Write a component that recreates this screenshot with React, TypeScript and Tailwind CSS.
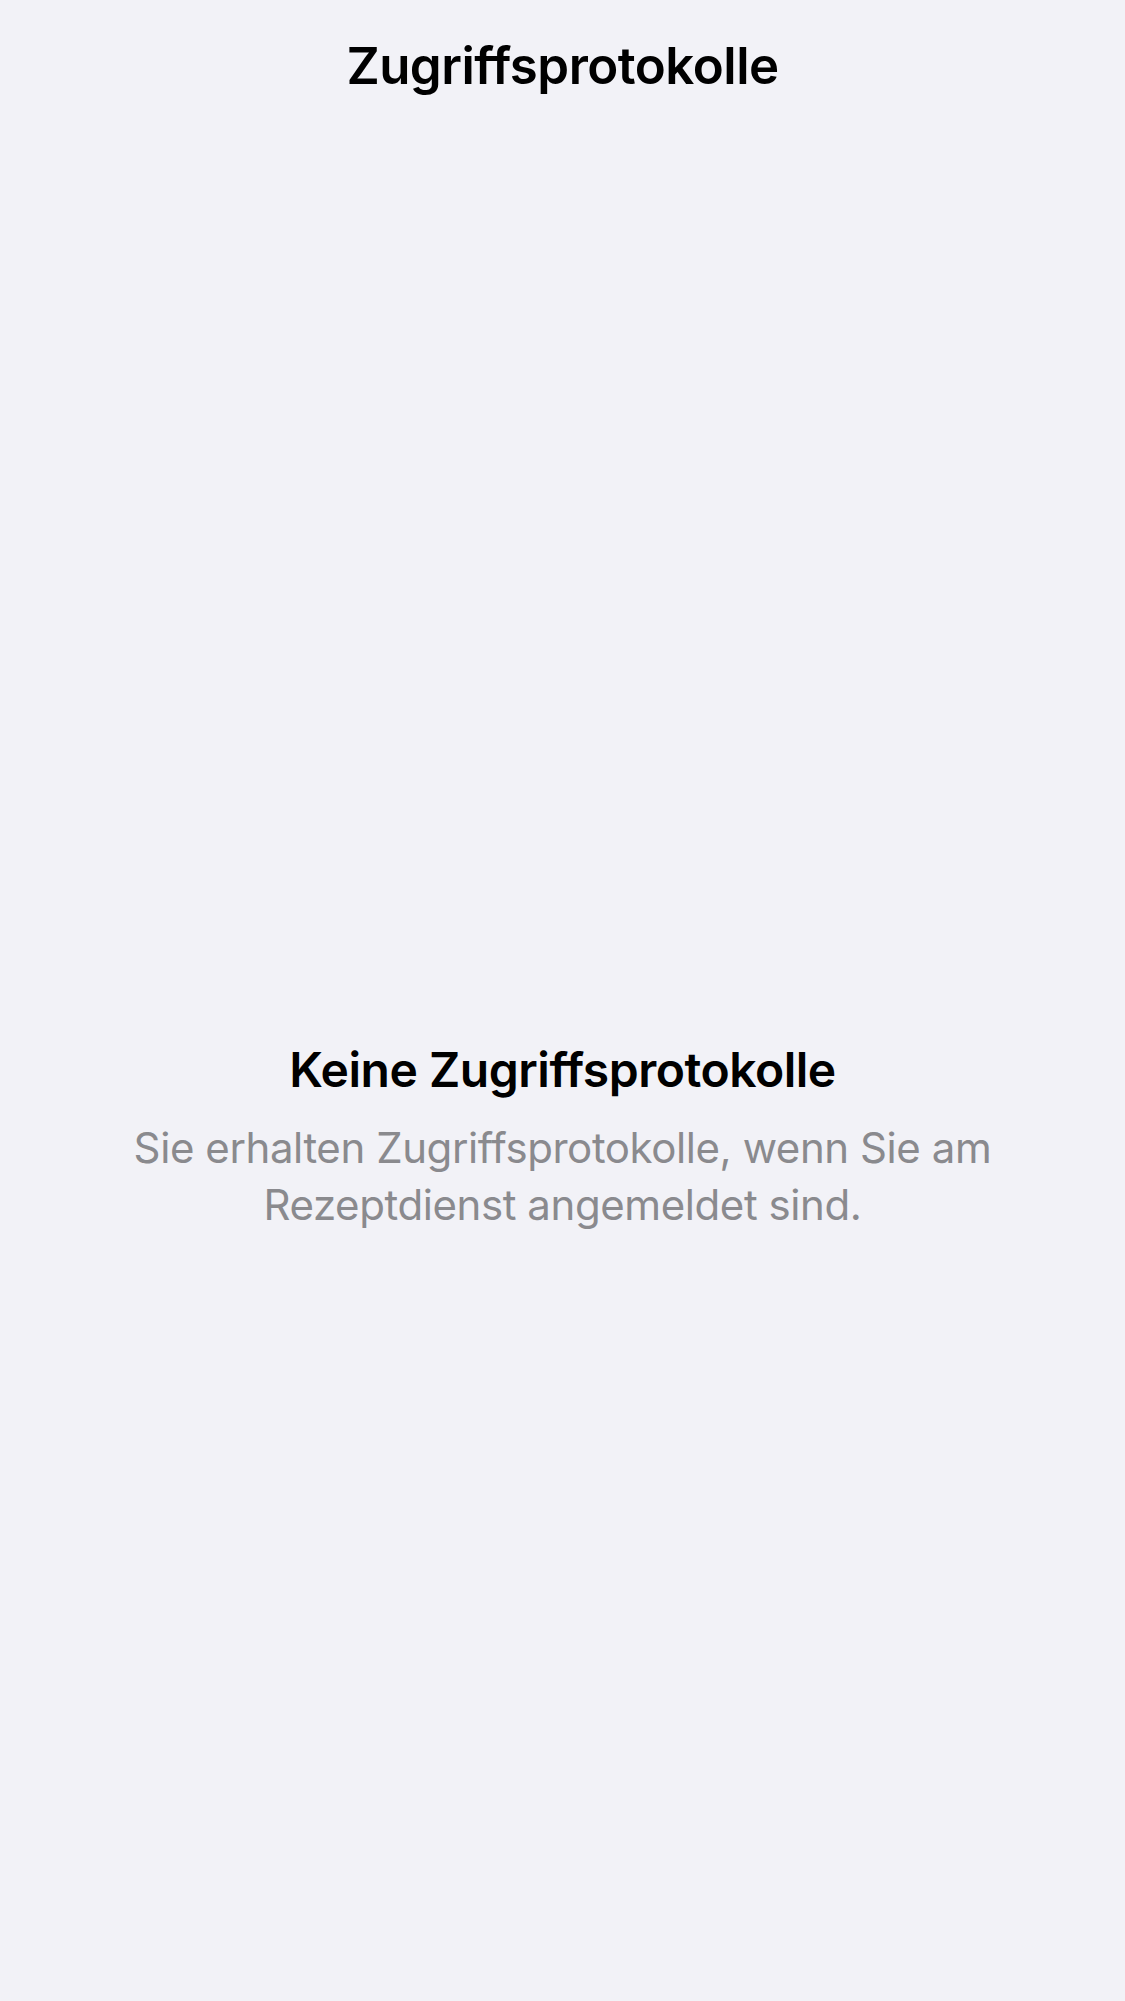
export default function App() {
  return (
    <div className="min-h-[2001px] w-full bg-[#f2f2f7] font-['Inter',sans-serif] text-black antialiased">
      <header className="flex justify-center pt-[40px]">
        <h1 className="text-[51px] font-semibold leading-none tracking-[-0.01em]">Zugriffsprotokolle</h1>
      </header>
      <main className="flex flex-col items-center px-[100px] pt-[955px] text-center">
        <h2 className="text-[48px] font-semibold leading-none tracking-[-0.01em]">Keine Zugriffsprotokolle</h2>
        <p className="mt-[25px] max-w-[900px] text-[42px] leading-[57px] tracking-[-0.01em] text-[#8a8a8e]">
          Sie erhalten Zugriffsprotokolle, wenn Sie am Rezeptdienst angemeldet sind.
        </p>
      </main>
    </div>
  );
}
